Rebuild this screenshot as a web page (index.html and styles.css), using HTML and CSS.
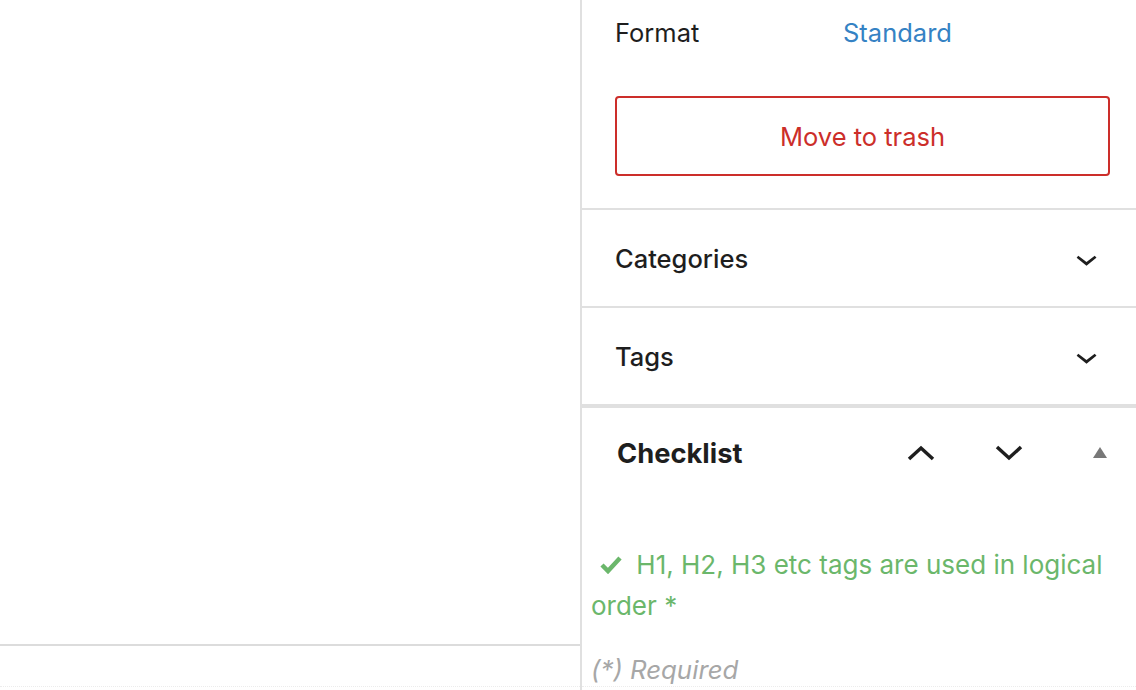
FILE: index.html
```html
<!DOCTYPE html>
<html lang="en">
<head>
  <meta charset="UTF-8" />
  <title>Post settings</title>
  <link rel="stylesheet" href="styles.css">
</head>
<body>
  <div class="editor">
    <div class="canvas"></div>
    <div class="editor-footer"></div>
  </div>

  <aside class="sidebar">
    <div class="panel panel-summary">
      <div class="row">
        <span class="row-label">Format</span>
        <a class="row-value" href="#">Standard</a>
      </div>
      <button class="trash-btn">Move to trash</button>
    </div>

    <div class="panel panel-toggle">
      <span class="panel-title">Categories</span>
      <svg class="chev" viewBox="0 0 24 24" width="43" height="43"><path d="M17.5 11.6L12 16l-5.5-4.4.9-1.2L12 14l4.6-3.6 1 1.2z"/></svg>
    </div>

    <div class="panel panel-toggle last">
      <span class="panel-title">Tags</span>
      <svg class="chev" viewBox="0 0 24 24" width="43" height="43"><path d="M17.5 11.6L12 16l-5.5-4.4.9-1.2L12 14l4.6-3.6 1 1.2z"/></svg>
    </div>

    <div class="checklist">
      <div class="checklist-head">
        <h2>Checklist</h2>
        <div class="head-tools">
          <svg class="tool" viewBox="0 0 30 20" width="30" height="20"><polyline points="3,16 15,5 27,16"/></svg>
          <svg class="tool" viewBox="0 0 30 20" width="30" height="20"><polyline points="3,4 15,15 27,4"/></svg>
          <svg class="tri" viewBox="0 0 16 14" width="16" height="14"><polygon points="8,1 15,12 1,12"/></svg>
        </div>
      </div>
      <ul class="checks">
        <li class="done"><svg class="tick" viewBox="0 0 22 18" width="22" height="18"><polyline points="2,9 8,15 20,2"/></svg> H1, H2, H3 etc tags are used in logical order *</li>
      </ul>
      <p class="required">(*) Required</p>
    </div>
  </aside>
</body>
</html>
```

FILE: styles.css
```css
body {
  margin: 0;
  height: 690px;
  overflow: hidden;
  display: flex;
  font-family: Inter, "Noto Sans", sans-serif;
  color: #1e1e1e;
  background: #fff;
}
.editor {
  flex: 0 0 580px;
  display: flex;
  flex-direction: column;
  border-right: 2px solid #e0e0e0;
}
.canvas {
  height: 644px;
  border-bottom: 2px solid #dcdcdc;
}
.editor-footer {
  flex: 1;
  border-bottom: 1px dotted #ececec;
  margin-bottom: 3px;
}
.sidebar {
  flex: 1;
  display: flex;
  flex-direction: column;
}
.panel {
  border-bottom: 2px solid #e0e0e0;
  padding: 0 26px 0 33px;
}
.panel-summary {
  padding-bottom: 32px;
}
.row {
  display: flex;
  align-items: center;
  height: 65px;
  font-size: 25.5px;
}
.row-label {
  width: 228px;
}
.row-value {
  color: #3582c4;
  text-decoration: none;
}
.trash-btn {
  display: block;
  width: 100%;
  height: 80px;
  margin-top: 31px;
  background: #fff;
  border: 2px solid #cc2e2a;
  border-radius: 4px;
  color: #cc2e2a;
  font-family: inherit;
  font-size: 25.5px;
}
.panel-toggle {
  height: 96px;
  display: flex;
  align-items: center;
  justify-content: space-between;
  padding-right: 28px;
}
.panel-toggle.last {
  border-bottom: 4px solid #e0e0e0;
}
.panel-title {
  font-size: 25.5px;
  font-weight: 500;
}
.chev {
  fill: #1e1e1e;
}
.checklist {
  flex: 1;
  border-bottom: 1px dotted #ececec;
  margin-bottom: 3px;
}
.checklist-head {
  height: 90px;
  display: flex;
  align-items: center;
  justify-content: space-between;
  padding: 0 28px 0 35px;
}
.checklist-head h2 {
  margin: 0;
  font-size: 27.3px;
  font-weight: 700;
}
.head-tools {
  display: flex;
  align-items: center;
  gap: 58px;
}
.tool {
  fill: none;
  stroke: #1e1e1e;
  stroke-width: 3.5;
}
.tri {
  fill: #787878;
  margin-left: 10px;
}
.checks {
  list-style: none;
  margin: 46px 0 0;
  padding: 0 20px 0 9px;
}
.checks li {
  font-size: 26px;
  line-height: 41px;
  color: #6bb76b;
}
.tick {
  fill: none;
  stroke: #6bb76b;
  stroke-width: 4.5;
  margin: 0 7px 0 9px;
}
.required {
  margin: 28px 0 0 9px;
  font-size: 25.8px;
  font-style: italic;
  color: #a7a7a7;
}
```
